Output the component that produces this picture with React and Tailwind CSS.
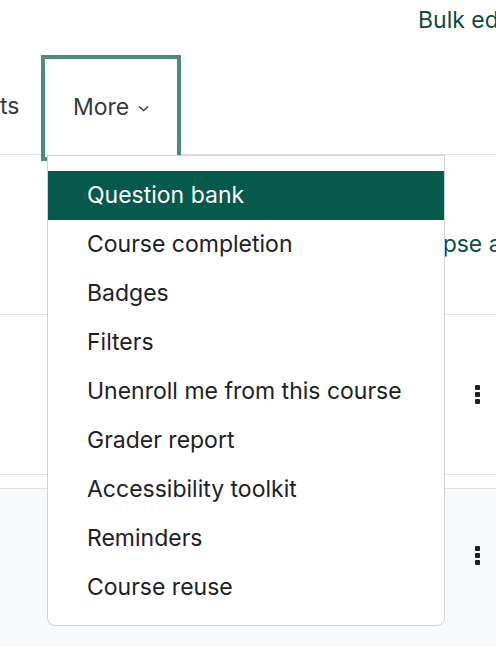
import React from "react";

const items = [
  "Question bank",
  "Course completion",
  "Badges",
  "Filters",
  "Unenroll me from this course",
  "Grader report",
  "Accessibility toolkit",
  "Reminders",
  "Course reuse",
];

const Dots = () => (
  <div className="flex flex-col gap-[2px]">
    <span className="w-[5px] h-[5px] rounded-[1px] bg-[#1d2125]"></span>
    <span className="w-[5px] h-[5px] rounded-[1px] bg-[#1d2125]"></span>
    <span className="w-[5px] h-[5px] rounded-[1px] bg-[#1d2125]"></span>
  </div>
);

const App = () => {
  return (
    <div className="relative w-[496px] h-[648px] overflow-hidden bg-white font-['Inter',sans-serif] text-[#1d2125]">
      {/* top bar */}
      <div className="h-[55px] pl-[418px] pt-[5px] text-[23px] leading-[30px] text-[#0b4d3f] whitespace-nowrap overflow-hidden">
        Bulk edit
      </div>

      {/* secondary nav */}
      <div className="flex h-[100px] border-b border-[#dee2e6]">
        <div className="w-[41px] flex items-center pt-[4px] text-[23px] text-[#343a40] overflow-hidden">ts</div>
        <div className="w-[140px] h-[106px] border-4 border-[#4f8a7b] bg-white flex items-center pl-[28px] pb-[2px] gap-[9px] text-[23px] text-[#343a40] z-10">
          More
          <svg width="11" height="7" viewBox="0 0 11 7" className="mt-[3px]">
            <polyline points="1,1.5 5.5,5.5 10,1.5" fill="none" stroke="#343a40" strokeWidth="1.4" />
          </svg>
        </div>
      </div>

      {/* course content */}
      <div className="h-[160px] border-b border-[#dee2e6] pt-[72px] pl-[388px] text-[23px] leading-[34px] text-[#0b4d3f] whitespace-nowrap overflow-hidden">
        Collapse all
      </div>
      <div className="h-[159px] flex items-center justify-end pr-[16px]">
        <Dots />
      </div>
      <div className="h-[15px] border-t border-b border-[#dee2e6]"></div>
      <div className="h-[158px] bg-[#f8f9fa] flex items-start justify-end pr-[16px] pt-[57px]">
        <Dots />
      </div>

      {/* dropdown */}
      <div className="absolute left-[47px] top-[155px] w-[398px] h-[471px] bg-white border border-[#cfd3d7] rounded-b-[8px] pt-[15px] z-20">
        {items.map((item, index) => (
          <div
            key={index}
            className={`h-[49px] flex items-center pl-[39px] text-[23px] ${
              index === 0 ? "bg-[#065a4b] text-white" : "text-[#1d2125]"
            }`}
          >
            {item}
          </div>
        ))}
      </div>
    </div>
  );
};

export default App;
